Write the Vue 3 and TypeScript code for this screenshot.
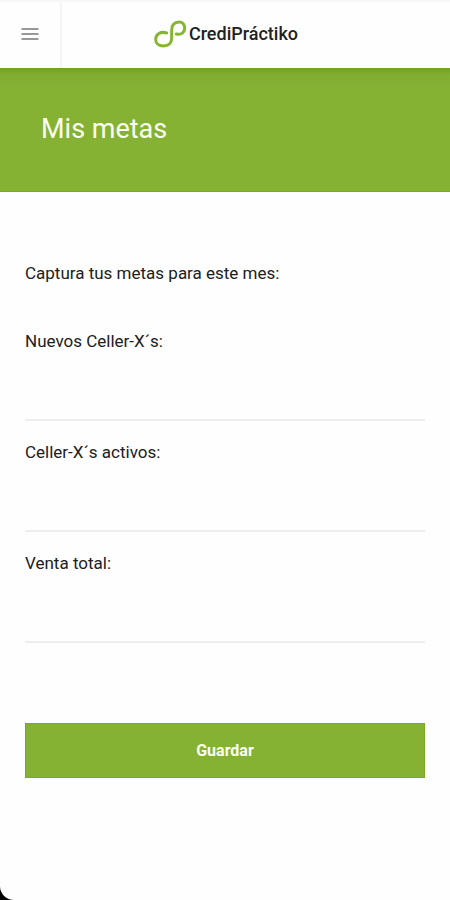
<script setup lang="ts">
import { reactive } from 'vue'

interface Goal {
  id: string
  label: string
}

const goals: Goal[] = [
  { id: 'nuevos', label: 'Nuevos Celler-X´s:' },
  { id: 'activos', label: 'Celler-X´s activos:' },
  { id: 'venta', label: 'Venta total:' },
]

const values = reactive<Record<string, string>>({ nuevos: '', activos: '', venta: '' })

function save(): void {
  Object.keys(values).forEach((key) => {
    values[key] = values[key].trim()
  })
}
</script>

<template>
  <div class="screen">
    <header class="topbar">
      <button class="menu" type="button" aria-label="Menú">
        <svg width="18" height="14" viewBox="0 0 18 14" aria-hidden="true">
          <path d="M0.5 1H17.5M0.5 6H17.5M0.5 11H17.5" stroke="#77757a" stroke-width="1.6" />
        </svg>
      </button>
      <div class="brand">
        <svg class="mark" width="32" height="28" viewBox="0 0 96 84" fill="none" aria-hidden="true">
          <path
            d="M38 39C20 33 5 43 5 58C5 70 15 78 28 78C44 78 53 69 53 55V30C53 15 62 6 75 6C86 6 92 14 92 25C92 37 82 46 67 42"
            stroke="#86b532"
            stroke-width="9"
            stroke-linecap="round"
          />
        </svg>
        <span class="name">CrediPráctiko</span>
      </div>
    </header>

    <section class="banner">
      <h1>Mis metas</h1>
    </section>

    <main>
      <form @submit.prevent="save">
        <p class="intro">Captura tus metas para este mes:</p>
        <div v-for="goal in goals" :key="goal.id" class="field">
          <label :for="goal.id">{{ goal.label }}</label>
          <input :id="goal.id" v-model="values[goal.id]" type="text" inputmode="numeric" />
        </div>
        <button class="save" type="submit">Guardar</button>
      </form>
    </main>
  </div>
</template>

<style>
body {
  margin: 0;
  background: #000;
}
</style>

<style scoped>
.screen {
  box-sizing: border-box;
  min-height: 100vh;
  background: #fefefe;
  border-bottom-left-radius: 14px;
  font-family: Roboto, "Liberation Sans", sans-serif;
  color: #202020;
}

.topbar {
  box-sizing: border-box;
  display: flex;
  height: 68px;
  border-top: 2px solid #f7f7f7;
}

.menu {
  display: flex;
  align-items: center;
  justify-content: center;
  width: 62px;
  padding: 0;
  border: 0;
  border-right: 2px solid #f5f5f5;
  background: none;
  cursor: pointer;
}

.brand {
  flex: 1;
  display: flex;
  align-items: center;
  justify-content: center;
  gap: 3px;
  padding: 0 60px 2px 0;
}

.name {
  font-size: 18px;
  font-weight: 500;
  line-height: 24px;
  color: #222;
}

.banner {
  box-sizing: border-box;
  height: 124px;
  padding: 44px 41px;
  background: linear-gradient(#74a32a, #80ae31 6px, #86b233 20px);
  border-top: 1px solid #71a31b;
  border-bottom: 1px solid #78a824;
}

h1 {
  margin: 0;
  font-size: 27px;
  font-weight: 400;
  line-height: 32px;
  color: #fbfff2;
}

main {
  padding: 69px 25px 0;
}

.intro {
  margin: 0 0 44px;
  font-size: 17px;
  line-height: 24px;
}

.field {
  display: flex;
  flex-direction: column;
  margin-bottom: 19px;
}

label {
  font-size: 17px;
  line-height: 24px;
}

input {
  box-sizing: border-box;
  width: 100%;
  height: 68px;
  padding: 20px 0 0;
  border: 0;
  border-bottom: 2px solid #eee;
  border-radius: 0;
  background: none;
  font: inherit;
  font-size: 17px;
  outline: none;
}

.save {
  display: block;
  width: 100%;
  height: 55px;
  margin-top: 80px;
  padding: 0;
  border: 1px solid #7aaa24;
  background: #86b233;
  color: #fbfff2;
  font: inherit;
  font-size: 16px;
  font-weight: 700;
  cursor: pointer;
}
</style>
